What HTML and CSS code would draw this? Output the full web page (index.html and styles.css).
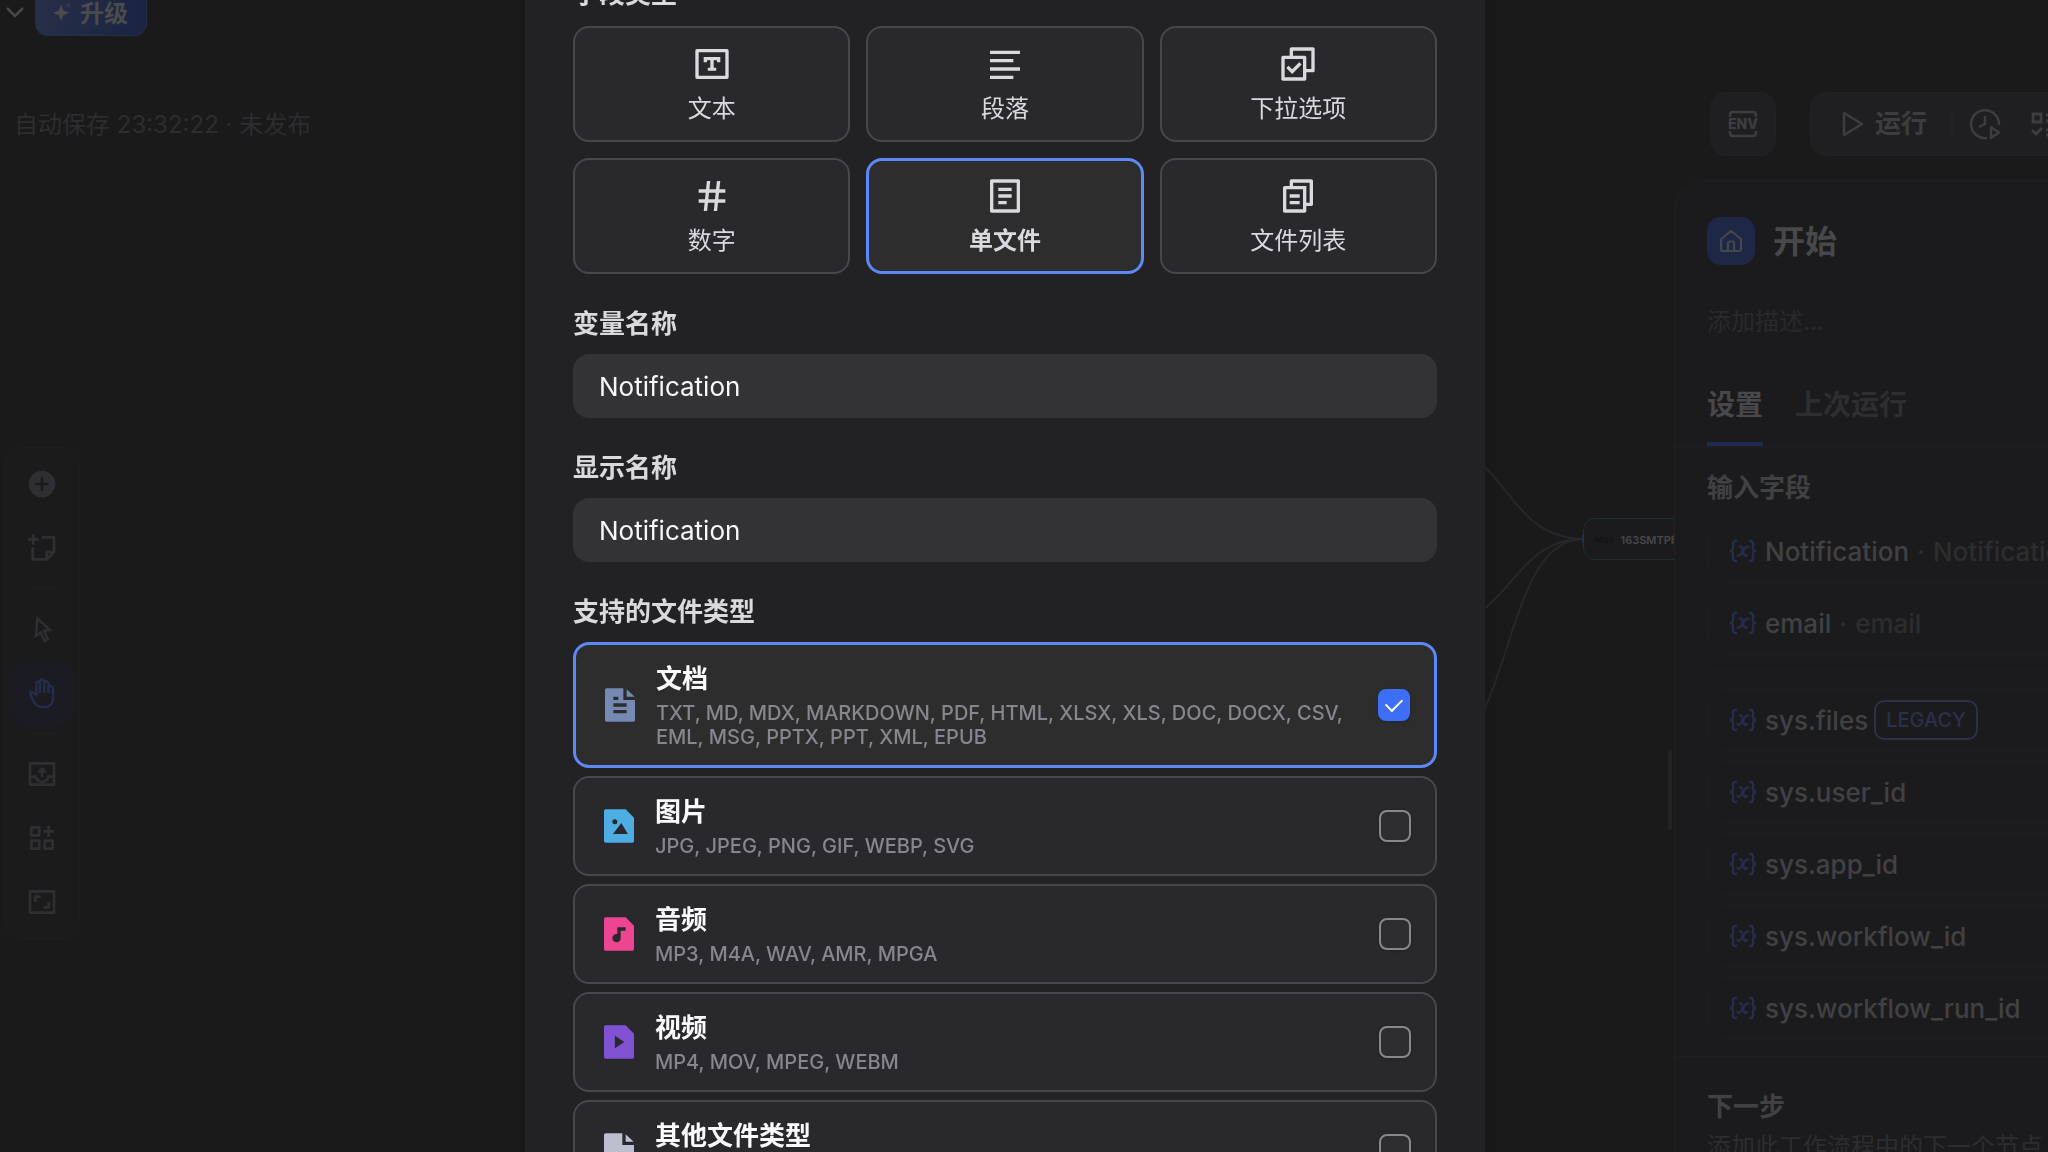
FILE: index.html
```
<!DOCTYPE html>
<html lang="zh-CN">
<head>
    <meta charset="UTF-8">
    <title>开始</title>
    <link rel="stylesheet" href="styles.css">
</head>
<body>
    <!-- shared icon shapes -->
    <svg class="sprite" aria-hidden="true">
        <symbol id="icon-var" viewBox="0 0 28 24">
            <g fill="none" stroke="currentColor" stroke-width="2.4" stroke-linecap="round" stroke-linejoin="round">
                <path d="M7 2H6.5C4.5 2 4 3 4 4.5V9C4 10.8 3.2 11.6 2 12C3.2 12.4 4 13.2 4 15V19.5C4 21 4.5 22 6.5 22H7" />
                <path d="M21 2H21.5C23.5 2 24 3 24 4.5V9C24 10.8 24.8 11.6 26 12C24.8 12.4 24 13.2 24 15V19.5C24 21 23.5 22 21.5 22H21" />
                <path d="M10.5 7.5C13 6.5 13.5 9 14 12C14.5 15 15 17.5 18 16.5" />
                <path d="M19.5 7.5C17 6.5 15.5 9.5 14 12C12.5 14.5 11 17.5 8.5 16.5" />
            </g>
        </symbol>
        <symbol id="icon-page" viewBox="0 0 24 24">
            <path d="M3 3a1 1 0 0 1 1-1h10v7h7v12a1 1 0 0 1-1 1H4a1 1 0 0 1-1-1zM16 2.5V7h4.8z" fill="currentColor" />
        </symbol>
    </svg>

    <div class="app">
        <div class="canvas">
            <svg class="edges" viewBox="0 0 120 300" fill="none" stroke="currentColor" stroke-width="2">
                <path d="M0 51C44 74 54 139 120 139" />
                <path d="M0 222C50 198 58 139 120 139" />
                <path d="M0 344C50 282 50 139 120 139" />
            </svg>
            <div class="node">
                <span class="node-handle"></span>
                <span class="node-icon">Mail</span>
                <span class="node-title">163SMTP邮件发送</span>
            </div>
        </div>

        <div class="left">
            <div class="topbar">
                <svg class="chevron" viewBox="0 0 20 12" fill="none" stroke="currentColor" stroke-width="2.5"><path d="M2 2L10 10L18 2" /></svg>
                <button class="upgrade" type="button">
                    <svg viewBox="0 0 24 24" fill="currentColor">
                        <path d="M10 5L12.5 11.5L19 14L12.5 16.5L10 23L7.5 16.5L1 14L7.5 11.5Z" />
                        <path d="M18 2L19 4.5L21.5 5.5L19 6.5L18 9L17 6.5L14.5 5.5L17 4.5Z" opacity=".5" />
                    </svg>
                    升级
                </button>
            </div>
            <p class="save-status">自动保存 23:32:22 · 未发布</p>
            <div class="toolbar">
                <button type="button" aria-label="添加节点">
                    <svg viewBox="0 0 24 24" fill="currentColor"><path fill-rule="evenodd" d="M12 2a10 10 0 1 0 0 20a10 10 0 0 0 0-20zM11 7h2v4h4v2h-4v4h-2v-4H7v-2h4z" /></svg>
                </button>
                <button type="button" aria-label="添加注释">
                    <svg viewBox="0 0 24 24" fill="none" stroke="currentColor" stroke-width="2"><path d="M12 4H21V15L15.500 20.500H5V11.500M15.500 20V15H21M5.500 1.500V9.500M1.500 5.500H9.500" /></svg>
                </button>
                <hr>
                <button type="button" aria-label="指针">
                    <svg viewBox="0 0 24 24" fill="none" stroke="currentColor" stroke-width="1.8"><path d="M8.5 4L18 12.8L13.5 13.3L16.5 19.8L13.8 21L11 14.5L7.5 17Z" /></svg>
                </button>
                <button class="active" type="button" aria-label="手型">
                    <svg viewBox="0 0 24 24" fill="none" stroke="currentColor" stroke-width="1.8" stroke-linejoin="round"><path d="M7.800 14V4.300Q9 2.500 10.400 4.300V12M10.400 12V2.800Q12 .5 13.600 2.800V12M13.600 4Q15.300 2.300 16.800 4.500V12M16.800 7.500Q18.500 5.500 20.200 8V16C20.200 20.500 17 22.800 13 22.800C8 22.800 5.500 19 3.200 12.500C2.600 10.800 4.800 10.500 5.600 11.800L7.800 14" /></svg>
                </button>
                <hr>
                <button type="button" aria-label="导出">
                    <svg viewBox="0 0 24 24" fill="currentColor"><path fill-rule="evenodd" d="M3 3h18a1 1 0 0 1 1 1v16a1 1 0 0 1-1 1H3a1 1 0 0 1-1-1V4a1 1 0 0 1 1-1zM4 5v8h4a4 4 0 0 0 8 0h4V5zM4 15v4h16v-4h-2.400a6 6 0 0 1-11.200 0zM12 6.500L16 11H13V14.500H11V11H8z" /></svg>
                </button>
                <button type="button" aria-label="整理节点">
                    <svg viewBox="0 0 24 24" fill="none" stroke="currentColor" stroke-width="2" stroke-linejoin="round"><path d="M4 4H10V10H4ZM4 14H10V20H4ZM14 14H20V20H14ZM17 3V11M13 7H21" /></svg>
                </button>
                <button type="button" aria-label="最大化画布">
                    <svg viewBox="0 0 24 24" fill="none" stroke="currentColor" stroke-width="2"><path d="M3 4H21V20H3ZM7 12V8H11M17 12V16H13" /></svg>
                </button>
            </div>
        </div>

        <div class="right">
            <div class="actions">
                <button class="env" type="button" aria-label="环境变量">
                    <svg viewBox="0 0 32 32">
                        <path d="M3 9V7Q3 4 6 4H26Q29 4 29 7V9M3 23V25Q3 28 6 28H26Q29 28 29 25V23" fill="none" stroke="currentColor" stroke-width="2.5" />
                        <text x="16" y="21" text-anchor="middle">ENV</text>
                    </svg>
                </button>
                <span class="bar"></span>
                <div class="run-group">
                    <button class="run" type="button">
                        <svg viewBox="0 0 24 28" fill="none" stroke="currentColor" stroke-width="2.5" stroke-linejoin="round"><path d="M3 3L21 14L3 25Z" /></svg>
                        运行
                    </button>
                    <span class="bar"></span>
                    <button type="button" aria-label="运行历史">
                        <svg viewBox="0 0 32 32" fill="none" stroke="currentColor" stroke-width="2.5"><path d="M30 17A14 14 0 1 0 18 30M16 8V16L10 19M22 19L30 24.500L22 30Z" stroke-linejoin="round" /></svg>
                    </button>
                    <button type="button" aria-label="检查清单">
                        <svg viewBox="0 0 32 32" fill="none" stroke="currentColor" stroke-width="2.8"><path d="M4 6H12V14H4ZM3 22L7 26L13 20M17 7H29M17 13H29M17 22H29M17 27H29" /></svg>
                    </button>
                </div>
            </div>

            <aside class="panel">
                <span class="resizer"></span>
                <div class="panel-head">
                    <span class="home">
                        <svg viewBox="0 0 24 24" fill="none" stroke="currentColor" stroke-width="2.2" stroke-linejoin="round"><path d="M2 10L12 2L22 10V20Q22 22 20 22H4Q2 22 2 20ZM9 22V14Q9 12.500 10.500 12.500H13.500Q15 12.500 15 14V22" /></svg>
                    </span>
                    <h2>开始</h2>
                </div>
                <p class="panel-desc">添加描述...</p>
                <div class="tabs">
                    <button class="current" type="button">设置</button>
                    <button type="button">上次运行</button>
                </div>
                <div class="panel-body">
                    <h3>输入字段</h3>
                    <ul class="vars">
                        <li><svg><use href="#icon-var" /></svg>Notification<i>·</i><em>Notification</em></li>
                        <li><svg><use href="#icon-var" /></svg>email<i>·</i><em>email</em></li>
                    </ul>
                    <hr>
                    <ul class="vars">
                        <li><svg><use href="#icon-var" /></svg>sys.files<span class="legacy">LEGACY</span></li>
                        <li><svg><use href="#icon-var" /></svg>sys.user_id</li>
                        <li><svg><use href="#icon-var" /></svg>sys.app_id</li>
                        <li><svg><use href="#icon-var" /></svg>sys.workflow_id</li>
                        <li><svg><use href="#icon-var" /></svg>sys.workflow_run_id</li>
                    </ul>
                </div>
                <div class="next">
                    <h3>下一步</h3>
                    <p>添加此工作流程中的下一个节点</p>
                </div>
            </aside>
        </div>
    </div>

    <div class="modal-layer">
        <form class="modal" role="dialog">
            <h4 class="field-label">字段类型</h4>
            <div class="types">
                <button class="type" type="button">
                    <svg viewBox="0 0 24 24" fill="currentColor"><path fill-rule="evenodd" d="M3 3h18a1 1 0 0 1 1 1v16a1 1 0 0 1-1 1H3a1 1 0 0 1-1-1V4a1 1 0 0 1 1-1zM4 5v14h16V5zM7 7.800H17V11H15V9.800H13V14.200H14.500V16H9.500V14.200H11V9.800H9V11H7z" /></svg>
                    文本
                </button>
                <button class="type" type="button">
                    <svg viewBox="0 0 24 24" fill="currentColor"><path d="M3 4H21V6H3V4ZM3 19H17V21H3V19ZM3 14H21V16H3V14ZM3 9H17V11H3V9Z" /></svg>
                    段落
                </button>
                <button class="type" type="button">
                    <svg viewBox="0 0 24 24" fill="currentColor"><path d="M7 7V3C7 2.448 7.448 2 8 2H21C21.552 2 22 2.448 22 3V16C22 16.552 21.552 17 21 17H17V20.993C17 21.549 16.551 22 15.993 22H3.007C2.451 22 2 21.551 2 20.993L2.003 8.007C2.003 7.451 2.452 7 3.010 7H7ZM9 7H15.993C16.549 7 17 7.449 17 8.007V15H20V4H9V7ZM15 9H4.003L4 20H15V9ZM8.502 18L4.967 14.465L6.381 13.050L8.502 15.172L12.745 10.929L14.159 12.343L8.502 18Z" /></svg>
                    下拉选项
                </button>
                <button class="type" type="button">
                    <svg viewBox="0 0 24 24" fill="currentColor"><path d="M7.784 14L8.205 10H4V8H8.415L8.940 3H10.951L10.426 8H14.415L14.940 3H16.951L16.426 8H20V10H16.216L15.795 14H20V16H15.585L15.060 21H13.049L13.574 16H9.585L9.060 21H7.049L7.574 16H4V14H7.784ZM9.795 14H13.784L14.205 10H10.216L9.795 14Z" /></svg>
                    数字
                </button>
                <button class="type selected" type="button">
                    <svg viewBox="0 0 24 24" fill="currentColor"><path d="M20 22H4C3.448 22 3 21.552 3 21V3C3 2.448 3.448 2 4 2H20C20.552 2 21 2.448 21 3V21C21 21.552 20.552 22 20 22ZM19 20V4H5V20H19ZM8 7H16V9H8V7ZM8 11H16V13H8V11ZM8 15H13V17H8V15Z" /></svg>
                    单文件
                </button>
                <button class="type" type="button">
                    <svg viewBox="0 0 24 24" fill="currentColor"><path d="M7 6V3C7 2.448 7.448 2 8 2H20C20.552 2 21 2.448 21 3V17C21 17.552 20.552 18 20 18H17V20.999C17 21.552 16.550 22 15.993 22H4.007C3.451 22 3 21.555 3 20.999L3.003 7.001C3.003 6.448 3.453 6 4.009 6H7ZM5.002 8L5 20H15V8H5.002ZM9 6H17V16H19V4H9V6ZM7 11H13V13H7V11ZM7 15H13V17H7V15Z" /></svg>
                    文件列表
                </button>
            </div>

            <label class="field-label" for="varName">变量名称</label>
            <input class="text-input" type="text" id="varName" value="Notification">

            <label class="field-label" for="displayName">显示名称</label>
            <input class="text-input" type="text" id="displayName" value="Notification">

            <h4 class="field-label">支持的文件类型</h4>
            <div class="files">
                <label class="file selected">
                    <svg class="doc" viewBox="0 0 24 24" fill="currentColor"><path fill-rule="evenodd" d="M3 3a1 1 0 0 1 1-1h10v7h7v12a1 1 0 0 1-1 1H4a1 1 0 0 1-1-1zM8 7v2h3V7zM8 11v2h8v-2zM8 15v2h8v-2zM16 2.500V7h4.800z" /></svg>
                    <span class="file-text">
                        <strong>文档</strong>
                        <small>TXT, MD, MDX, MARKDOWN, PDF, HTML, XLSX, XLS, DOC, DOCX, CSV, EML, MSG, PPTX, PPT, XML, EPUB</small>
                    </span>
                    <input type="checkbox" checked>
                </label>
                <label class="file">
                    <svg class="image" viewBox="0 0 24 24" fill="currentColor"><path fill-rule="evenodd" d="M16 2L21 7V21a1 1 0 0 1-1 1H4a1 1 0 0 1-1-1V3a1 1 0 0 1 1-1zM9.500 8a1.500 1.500 0 1 0 0 3a1.500 1.500 0 0 0 0-3zM13.400 10.200L8.400 16.800H17.300z" /></svg>
                    <span class="file-text">
                        <strong>图片</strong>
                        <small>JPG, JPEG, PNG, GIF, WEBP, SVG</small>
                    </span>
                    <input type="checkbox">
                </label>
                <label class="file">
                    <svg class="audio" viewBox="0 0 24 24" fill="currentColor"><path fill-rule="evenodd" d="M16 2L21 7V21a1 1 0 0 1-1 1H4a1 1 0 0 1-1-1V3a1 1 0 0 1 1-1zM11 8V12.050A2.500 2.500 0 1 0 13 14.500V10H16V8z" /></svg>
                    <span class="file-text">
                        <strong>音频</strong>
                        <small>MP3, M4A, WAV, AMR, MPGA</small>
                    </span>
                    <input type="checkbox">
                </label>
                <label class="file">
                    <svg class="video" viewBox="0 0 24 24" fill="currentColor"><path fill-rule="evenodd" d="M16 2L21 7V21a1 1 0 0 1-1 1H4a1 1 0 0 1-1-1V3a1 1 0 0 1 1-1zM9.500 8.300V15.700L15.200 12z" /></svg>
                    <span class="file-text">
                        <strong>视频</strong>
                        <small>MP4, MOV, MPEG, WEBM</small>
                    </span>
                    <input type="checkbox">
                </label>
                <label class="file">
                    <svg class="other"><use href="#icon-page" /></svg>
                    <span class="file-text">
                        <strong>其他文件类型</strong>
                        <small>指定其他文件类型</small>
                    </span>
                    <input type="checkbox">
                </label>
            </div>
        </form>
    </div>
</body>
</html>
```
FILE: styles.css
```
* {
    box-sizing: border-box;
}

body {
    margin: 0;
    height: 100vh;
    overflow: hidden;
    background: #1a1a1b;
    color: #d9d9de;
    font-family: Inter, "Noto Sans CJK SC", sans-serif;
    font-size: 26px;
}

h2, h3, h4, p, ul {
    margin: 0;
    padding: 0;
}

button {
    margin: 0;
    padding: 0;
    border: none;
    background: none;
    color: inherit;
    font: inherit;
    cursor: pointer;
}

svg {
    display: block;
    flex: none;
}

.sprite {
    position: absolute;
    width: 0;
    height: 0;
}

/* workspace behind the dialog */
.app {
    position: relative;
    display: flex;
    justify-content: space-between;
    height: 100vh;
    overflow: hidden;
}

.canvas {
    position: absolute;
    inset: 0;
}

.edges {
    position: absolute;
    top: 400px;
    right: 464px;
    width: 120px;
    height: 300px;
    overflow: visible;
    color: #27272b;
}

.node {
    position: absolute;
    top: 518px;
    right: 305px;
    display: flex;
    align-items: center;
    gap: 7px;
    width: 160px;
    height: 42px;
    padding-left: 10px;
    border: 1px solid #20302a;
    border-radius: 12px;
    background: #1b1b1d;
    white-space: nowrap;
}

.node-handle {
    position: absolute;
    left: -2px;
    top: 16px;
    width: 2px;
    height: 8px;
    background: #222f52;
}

.node-icon {
    color: #121214;
    font-size: 10px;
}

.node-title {
    color: #48484b;
    font-size: 11px;
    font-weight: 600;
}

.left,
.right {
    position: relative;
}

.topbar {
    display: flex;
    align-items: flex-start;
    gap: 10px;
    height: 36px;
    padding-left: 5px;
}

.chevron {
    width: 20px;
    height: 12px;
    margin-top: 6px;
    color: #48484b;
}

.upgrade {
    display: flex;
    align-items: center;
    align-self: flex-end;
    gap: 6px;
    width: 112px;
    height: 48px;
    padding: 0 0 2px 16px;
    border: 1px solid #232d4c;
    border-radius: 12px;
    background: linear-gradient(100deg, #272f48, #1a2342);
    color: #4b4b4d;
    font-size: 24px;
    font-weight: 600;
}

.upgrade svg {
    width: 22px;
    height: 22px;
}

.save-status {
    margin-top: 73px;
    padding-left: 14px;
    color: #2d2d30;
    font-size: 24px;
    line-height: 32px;
}

.toolbar {
    width: 76px;
    margin: 306px 0 0 4px;
    padding: 4px 5px;
    border: 1px solid #1e1e20;
    border-radius: 16px;
    background: #1b1b1c;
    color: #2f2f33;
}

.toolbar button {
    display: flex;
    align-items: center;
    justify-content: center;
    width: 64px;
    height: 64px;
    border-radius: 16px;
}

.toolbar .active {
    background: #1b1b23;
    color: #242e4a;
}

.toolbar svg {
    width: 32px;
    height: 32px;
}

.toolbar hr {
    width: 28px;
    height: 1px;
    margin: 8px auto;
    border: none;
    background: #202022;
}

/* right column */
.right {
    display: flex;
    flex-direction: column;
    gap: 24px;
    width: 374px;
    padding-top: 92px;
}

.actions {
    display: flex;
    align-items: center;
    gap: 17px;
    padding-left: 36px;
    color: #3d3d40;
}

.env,
.run-group {
    flex: none;
    height: 64px;
    border: 1px solid #222224;
    border-radius: 16px;
    background: #1f1f21;
}

.env {
    display: flex;
    align-items: center;
    justify-content: center;
    width: 66px;
}

.actions svg {
    width: 32px;
    height: 32px;
}

.env text {
    fill: currentColor;
    font-size: 14px;
    font-weight: 800;
}

.bar {
    width: 2px;
    height: 28px;
    background: #232325;
}

.run-group {
    display: flex;
    align-items: center;
    gap: 16px;
    width: 320px;
    padding-left: 30px;
}

.run {
    display: flex;
    align-items: center;
    gap: 10px;
    padding-right: 8px;
    font-weight: 600;
    line-height: 32px;
}

.run svg {
    width: 24px;
    height: 28px;
}

.run-group button + button {
    margin-left: 12px;
}

.panel {
    position: relative;
    flex: 1;
    border: 1px solid #202022;
    border-width: 1px 0 0 1px;
    border-top-left-radius: 32px;
    background: #1b1b1d;
}

.resizer {
    position: absolute;
    left: -7px;
    top: 569px;
    width: 4px;
    height: 80px;
    border-radius: 2px;
    background: #232325;
}

.panel-head {
    display: flex;
    align-items: center;
    gap: 18px;
    padding: 36px 0 0 32px;
}

.panel-head h2 {
    padding-top: 2px;
    color: #48484b;
    font-size: 32px;
    line-height: 46px;
}

.home {
    display: flex;
    align-items: center;
    justify-content: center;
    width: 48px;
    height: 48px;
    border-radius: 14px;
    background: #1e2745;
    color: #45474e;
}

.home svg {
    width: 24px;
    height: 24px;
}

.panel-desc {
    padding: 41px 0 0 32px;
    color: #29292c;
    font-size: 24px;
    line-height: 32px;
}

.tabs {
    display: flex;
    gap: 32px;
    height: 109px;
    padding: 0 32px;
    border-bottom: 1px solid #202022;
}

.tabs button {
    padding-top: 30px;
    border-bottom: 4px solid transparent;
    color: #2e2e31;
    font-size: 28px;
    font-weight: 600;
    line-height: 40px;
    white-space: nowrap;
}

.tabs .current {
    border-color: #1e2a50;
    color: #48484b;
    font-weight: 700;
}

.panel h3 {
    color: #414144;
    font-size: 26px;
    line-height: 40px;
}

.panel-body {
    padding: 21px 0 16px 32px;
    border-bottom: 1px solid #202022;
}

.panel-body hr {
    height: 1px;
    margin: 16px 0;
    border: none;
    background: #1e1e20;
}

.vars {
    display: flex;
    flex-direction: column;
    gap: 8px;
    list-style: none;
    color: #414144;
    font-weight: 500;
}

.panel-body h3 + .vars {
    margin-top: 11px;
}

.vars li {
    display: flex;
    align-items: center;
    height: 64px;
    padding-left: 20px;
    border: 2px solid #1d1d1f;
    border-right: none;
    border-radius: 16px 0 0 16px;
    white-space: nowrap;
    overflow: hidden;
}

.vars svg {
    width: 28px;
    height: 24px;
    margin-right: 8px;
    color: #242e4a;
}

.vars i {
    margin: 0 8px;
    color: #2d2d30;
    font-style: normal;
}

.vars em {
    color: #2d2d30;
    font-style: normal;
}

.legacy {
    height: 40px;
    margin-left: 6px;
    padding: 0 10px;
    border: 2px solid #2a314a;
    border-radius: 10px;
    color: #2a314a;
    font-size: 20px;
    line-height: 36px;
}

.next {
    padding: 30px 0 0 32px;
}

.next p {
    color: #2d2d30;
    font-size: 24px;
    line-height: 40px;
    white-space: nowrap;
}

/* dialog */
.modal-layer {
    position: fixed;
    inset: 0;
    display: flex;
    justify-content: center;
    align-items: flex-start;
    padding-right: 38px;
    overflow: hidden;
}

/* the dialog is scrolled, its first label is cut by the top edge */
.modal {
    width: 960px;
    margin-top: -54px;
    padding: 0 48px 48px;
    background: #222224;
    box-shadow: 0 0 24px rgba(0, 0, 0, 0.1);
}

.field-label {
    display: block;
    margin: 26px 0 6px;
    font-size: 26px;
    font-weight: 700;
    line-height: 48px;
}

.modal h4:first-child {
    margin: 24px 0 8px;
}

.types {
    display: grid;
    grid-template-columns: repeat(3, 1fr);
    gap: 16px;
}

.type {
    display: flex;
    flex-direction: column;
    align-items: center;
    justify-content: center;
    gap: 10px;
    height: 116px;
    border: 2px solid #48474e;
    border-radius: 16px;
    background: #29282d;
    font-size: 24px;
    line-height: 30px;
}

.type svg {
    width: 40px;
    height: 40px;
}

.selected {
    border: 3px solid #5c88f8;
    background: #2d2d2e;
}

.type.selected {
    font-weight: 600;
}

.text-input {
    display: block;
    width: 100%;
    height: 64px;
    padding: 0 26px;
    border: none;
    border-radius: 16px;
    background: #333335;
    color: #f7f7f8;
    font: inherit;
}

.files {
    display: flex;
    flex-direction: column;
    gap: 8px;
}

.file {
    display: flex;
    align-items: center;
    gap: 16px;
    padding: 18px 24px;
    border: 2px solid #48474e;
    border-radius: 16px;
    background: #29282d;
}

.file.selected {
    border: 3px solid #5c88f8;
    background: #2d2d2e;
}

.file svg {
    width: 40px;
    height: 40px;
}

.doc { color: #7589b2; }
.image { color: #4eade2; }
.audio { color: #ed4592; }
.video { color: #8052d2; }
.other { color: #bcbfd0; }

.file-text {
    display: flex;
    flex-direction: column;
    flex: 1;
    gap: 8px;
    padding-top: 2px;
    margin-bottom: -2px;
}

.file strong {
    color: #fbfbfc;
    font-size: 26px;
    font-weight: 700;
    line-height: 28px;
}

.file small {
    color: #85868e;
    font-size: 20px;
    font-weight: 500;
    line-height: 24px;
}

.file input {
    display: flex;
    align-items: center;
    justify-content: center;
    flex: none;
    width: 32px;
    height: 32px;
    margin: 0;
    border: 2px solid #88888a;
    border-radius: 8px;
    background: #2e2d31;
    box-shadow: 0 1px 3px rgba(0, 0, 0, 0.2);
    appearance: none;
}

.file input:checked {
    border-color: #3d6ef8;
    background: #3d6ef8;
}

.file input:checked::after {
    content: '';
    width: 14px;
    height: 8px;
    margin-bottom: 5px;
    border: solid #fff;
    border-width: 0 0 2px 2px;
    transform: rotate(-45deg);
}
```
